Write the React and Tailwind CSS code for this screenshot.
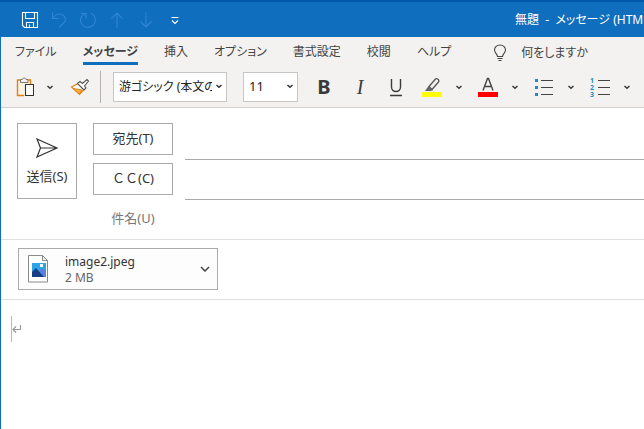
import React, { useState } from 'react';
import clsx from 'clsx';

const TABS = ['ファイル', 'メッセージ', '挿入', 'オプション', '書式設定', '校閲', 'ヘルプ'];

function Chevron({ className }) {
  return (
    <svg viewBox="0 0 8 5" className={clsx('w-2 h-[5px]', className)} fill="none" stroke="currentColor" strokeWidth="1.5">
      <path d="M1.500 1L4 3.300 6.500 1" />
    </svg>
  );
}

function QuickButton({ label, dim, children }) {
  return (
    <button
      type="button"
      aria-label={label}
      className={clsx('w-[29px] h-8 flex items-center justify-center', dim ? 'text-[#2f86d4]' : 'text-white')}
    >
      <svg viewBox="0 0 18 18" className="w-[18px] h-[18px]" fill="none" stroke="currentColor" strokeWidth="1.1">
        {children}
      </svg>
    </button>
  );
}

function TitleBar() {
  return (
    <header className="h-[37px] shrink-0 border-t-2 border-[#005aa9] bg-[#106ebe] flex items-center pt-px pl-[15px]">
      <QuickButton label="上書き保存">
        <path d="M1.500 1.500h15v15h-13l-2-2z M4.500 1.500v6h9v-6 M5.500 16.500v-5h7v5 M8.500 13.500v3" />
      </QuickButton>
      <QuickButton label="元に戻す" dim>
        <path d="M2.500 1.500v6h6 M2.500 7.500C5 4 8 2.500 11 3.200c4 1 5.500 5 3.500 8L9 16.500" />
      </QuickButton>
      <QuickButton label="やり直し" dim>
        <path d="M2 2.500h5v5 M7 2.500C3 4 1 7 1.600 10.500 2.300 14 5.500 16.300 9 16.300c4 0 7.400-3.200 7.400-7.200 0-3-1.700-5.500-4.400-6.600" />
      </QuickButton>
      <QuickButton label="前のアイテム" dim>
        <path d="M9 17V2 M3.500 7.500L9 2l5.500 5.500" />
      </QuickButton>
      <QuickButton label="次のアイテム" dim>
        <path d="M9 1v15 M3.500 10.500L9 16l5.500-5.500" />
      </QuickButton>
      <QuickButton label="クイック アクセス ツール バーのユーザー設定">
        <path d="M5.500 6.500h7 M6 9.500l3 3 3-3" />
      </QuickButton>
      <h1 className="ml-auto w-[129px] overflow-hidden whitespace-pre text-xs text-white">
        {'無題  -  メッセージ (HTML 形式)'}
      </h1>
    </header>
  );
}

function TabRow({ active, onSelect }) {
  return (
    <nav className="h-8 flex items-center gap-[26px] pl-3.5 whitespace-nowrap text-xs text-[#444]">
      {TABS.map((t) => (
        <button
          key={t}
          type="button"
          onClick={() => onSelect(t)}
          className={clsx('h-6 leading-5 border-b-3', t === active ? 'font-bold border-[#106ebe]' : 'border-transparent')}
        >
          {t}
        </button>
      ))}
      <button type="button" className="ml-4 flex items-center gap-3.5">
        <svg viewBox="0 0 14 18" className="w-3.5 h-[18px]" fill="none" stroke="currentColor" strokeWidth="1.1">
          <path d="M4.500 12.500C4.500 10 1.500 9 1.500 6a5.500 5 0 0 1 11 0c0 3-3 4-3 6.500z M4.500 14.500h5 M5.500 16.500h3" />
        </svg>
        何をしますか
      </button>
    </nav>
  );
}

function SelectBox({ label, className, options }) {
  return (
    <div className={clsx('relative h-[30px] shrink-0', className)}>
      <select
        aria-label={label}
        className="appearance-none w-full h-full border border-[#c8c6c4] bg-white pl-[5px] pr-3.5 text-[#222] overflow-hidden"
      >
        {options.map((o) => (
          <option key={o}>{o}</option>
        ))}
      </select>
      <Chevron className="absolute right-1 top-3 pointer-events-none text-[#333]" />
    </div>
  );
}

function Tool({ label, className, children }) {
  return (
    <button type="button" aria-label={label} className={clsx('h-8 shrink-0 flex items-center justify-center', className || 'w-9')}>
      {children}
    </button>
  );
}

function Split({ label, width, children }) {
  return (
    <div className="flex shrink-0">
      <Tool label={label} className={width}>{children}</Tool>
      <Tool label={`${label}のオプション`} className="w-[18px]">
        <Chevron />
      </Tool>
    </div>
  );
}

function Toolbar() {
  return (
    <div className="h-9 pl-2 flex items-center text-[#3b3b3b]">
      <Split label="貼り付け" width="w-8">
        <svg viewBox="0 0 18 20" className="w-[18px] h-5" fill="none">
          <path d="M2.500 4h11v4H8v9.500H2.500z" fill="#fdf3df" />
          <path d="M5 3H1.500v15.500H8 M11 3h3.500v4" stroke="#e8820c" strokeWidth="1.400" />
          <path d="M4.500 5.500v-3h2c0-2 3.500-2 3.500 0h2v3z" fill="#f3f2f1" stroke="#777" />
          <path d="M9.500 7.500h8v11h-8z" fill="#fff" stroke="#333" strokeWidth="1.100" />
        </svg>
      </Split>
      <Tool label="書式のコピー/貼り付け" className="w-[42px]">
        <svg viewBox="0 0 20 18" className="w-5 h-[18px]" fill="none">
          <path d="M1.500 9L8 5.500l6 6L9.500 16.500z" fill="#fff" stroke="#e8820c" strokeWidth="1.200" />
          <path d="M3 10.500l9 1.500-2.500 4z" fill="#f5b04a" stroke="#e8820c" />
          <path d="M7.500 5.500L10 3.500l2.500 2L17 1.500l1.500 1.500-4 5 1.500 2-2 2z" fill="#fff" stroke="#555" strokeWidth="1.100" />
        </svg>
      </Tool>
      <div className="w-px h-8 bg-[#b3b0ad] mr-3 -ml-px" />
      <SelectBox label="フォント" className="w-[114px] mr-4 text-xs" options={['游ゴシック (本文のフォント)', 'メイリオ']} />
      <SelectBox label="フォント サイズ" className="w-[55px] mr-2 text-[13px]" options={['11', '12', '14']} />
      <Tool label="太字"><b className="font-['Noto_Sans'] text-xl leading-7">B</b></Tool>
      <Tool label="斜体"><i className="font-['Liberation_Serif'] text-xl leading-7">I</i></Tool>
      <Tool label="下線">
        <svg viewBox="0 0 14 20" className="w-3.5 h-5" fill="none" stroke="currentColor" strokeWidth="1.400">
          <path d="M2.500 2v8c0 6 9 6 9 0V2 M1 18.500h12" />
        </svg>
      </Tool>
      <div className="flex gap-0.5">
        <Split label="蛍光ペンの色">
          <svg viewBox="0 0 20 20" className="w-5 h-5" fill="none">
            <path d="M7 9.500L13.500 2c1-1 4.500.5 3 3L10 12.500z" stroke="#555" strokeWidth="1.300" />
            <path d="M6.500 9L11 13l-2 1H3z" fill="#666" />
            <path d="M0 15h20v5H0z" fill="#ff0" />
          </svg>
        </Split>
        <Split label="フォントの色">
          <svg viewBox="0 0 20 20" className="w-5 h-5" fill="none">
            <path d="M5 13.500L9.500 1.500h1L15 13.500 M6.500 9.500h7" stroke="#444" strokeWidth="1.400" />
            <path d="M0 15h20v5H0z" fill="#f00" />
          </svg>
        </Split>
        <Split label="箇条書き">
          <svg viewBox="0 0 20 18" className="w-5 h-[18px]">
            <path d="M1 1h3v3H1z M1 8h3v3H1z M1 15h3v3H1z" fill="#1e8bcd" />
            <path d="M7 2h12v1H7z M7 9h12v1H7z M7 16h12v1H7z" fill="#444" />
          </svg>
        </Split>
        <Split label="段落番号">
          <span className="flex items-center gap-1">
            <span className="text-[7px] leading-[7px] font-bold text-[#1e8bcd]">1<br />2<br />3</span>
            <svg viewBox="0 0 12 18" className="w-3 h-[18px]">
              <path d="M0 2h12v1H0z M0 9h12v1H0z M0 16h12v1H0z" fill="#444" />
            </svg>
          </span>
        </Split>
      </div>
    </div>
  );
}

function Addressing() {
  return (
    <section className="h-[132px] pl-4 flex border-b border-[#e1dfdd] pt-[15px] text-[13px] text-[#333]">
      <button type="button" className="w-[60px] h-[76px] shrink-0 border border-[#ababab] flex flex-col items-center pt-3.5">
        <svg viewBox="0 0 24 20" className="w-6 h-5" fill="none" stroke="currentColor" strokeWidth="1.200">
          <path d="M2 1l20 9-20 9 3.500-9z M5.500 10H22" />
        </svg>
        <span className="mt-2 leading-5">送信(S)</span>
      </button>
      <div className="ml-4 w-20 shrink-0 flex flex-col gap-2">
        <button type="button" className="h-8 border border-[#ababab]">宛先(T)</button>
        <button type="button" className="h-8 border border-[#ababab] [font-feature-settings:normal]">ＣＣ(C)</button>
        <label htmlFor="subject" className="h-8 leading-[30px] text-center text-[#777]">件名(U)</label>
      </div>
      <div className="ml-3 flex-1 flex flex-col">
        <input aria-label="宛先" className="h-[37px] border-b border-[#ababab] outline-none" />
        <input aria-label="CC" className="h-10 border-b border-[#ababab] outline-none" />
        <input id="subject" className="h-9 outline-none" />
      </div>
    </section>
  );
}

function Attachment() {
  return (
    <section className="h-[60px] pl-[17px] pt-2 border-b border-[#e1dfdd]">
      <button type="button" className="w-[200px] h-[42px] border border-[#ababab] bg-[#fdfdfd] flex items-center px-[7px] text-left">
        <svg viewBox="0 0 24 30" className="w-6 h-[30px] shrink-0" fill="none">
          <path d="M2.500 1.500h14l5 5v21.500h-19z" fill="#fff" stroke="#8a8a8a" />
          <path d="M16.500 1.500v5h5z" fill="#eee" stroke="#8a8a8a" />
          <path d="M6 9h14v14H6z" fill="#2ba5e8" />
          <path d="M13 17l3-3 4 4v5h-6z" fill="#5b7fdd" />
          <path d="M6 18l4-4 8 9H6z" fill="#173f86" />
          <path d="M14 10h3v3h-3z" fill="#fff" />
        </svg>
        <span className="ml-[15px] pt-0.5 flex-1 flex flex-col text-xs leading-4 text-[#333]">
          <span>image2.jpeg</span>
          <span className="text-[#666]">2 MB</span>
        </span>
        <svg viewBox="0 0 10 6" className="w-2.5 h-1.5" fill="none" stroke="#444" strokeWidth="1.500">
          <path d="M1 1l4 4 4-4" />
        </svg>
      </button>
    </section>
  );
}

export default function App() {
  const [tab, setTab] = useState('メッセージ');

  return (
    <div className="min-h-screen flex flex-col overflow-hidden bg-white font-['Noto_Sans','Noto_Sans_CJK_JP',sans-serif] [font-feature-settings:'palt']">
      <TitleBar />
      <main className="flex-1 flex flex-col border-l border-[#106ebe]">
        <div className="h-[71px] shrink-0 bg-[#f3f2f1] border-b border-[#d2d0ce]">
          <TabRow active={tab} onSelect={setTab} />
          <Toolbar />
        </div>
        <Addressing />
        <Attachment />
        <div className="flex-1 pl-2.5 pt-4">
          <div className="h-[26px] border-l border-[#bbb] flex items-center">
            <svg viewBox="0 0 10 10" className="w-2.5 h-2.5" fill="none" stroke="#999" strokeWidth="1.200">
              <path d="M8.500 1v4.500H1 M4 2.500l-3 3 3 3" />
            </svg>
          </div>
        </div>
      </main>
    </div>
  );
}
